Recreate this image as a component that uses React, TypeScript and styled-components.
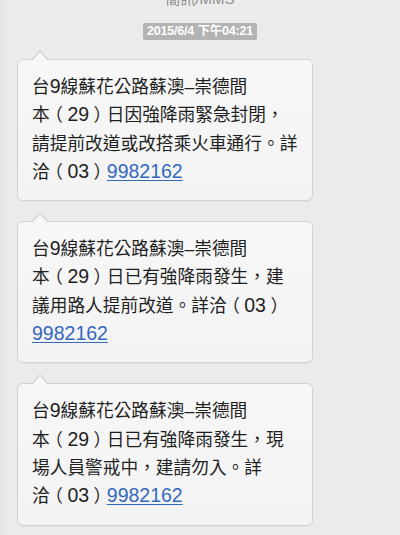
import React from "react";
import styled, { createGlobalStyle } from "styled-components";

const GlobalStyle = createGlobalStyle`
  html, body {
    margin: 0;
    padding: 0;
    background: #ebebeb;
  }
  body {
    font-family: "Liberation Sans", "Noto Sans CJK TC", sans-serif;
    overflow: hidden;
  }
`;

const Screen = styled.div`
  width: 400px;
  height: 535px;
  overflow: hidden;
  background: linear-gradient(to right, #e4e4e4 0px, #ebebeb 10px, #ebebeb 100%);
  display: flex;
  flex-direction: column;
  align-items: center;
`;

const Title = styled.div`
  margin-top: -9px;
  font-size: 15px;
  line-height: 16px;
  color: #8f8f8f;
  text-align: center;
`;

const DatePill = styled.div`
  margin-top: 16px;
  height: 17px;
  line-height: 17px;
  padding: 0 4px;
  background: #b3b3b3;
  color: #ffffff;
  font-size: 12.5px;
  font-weight: bold;
  letter-spacing: -0.2px;
  border-radius: 2px;
`;

const Thread = styled.div`
  align-self: stretch;
  display: flex;
  flex-direction: column;
  gap: 20px;
  padding: 19px 0 0 17px;
`;

const Bubble = styled.div`
  position: relative;
  box-sizing: border-box;
  width: 296px;
  padding: 13px 14px 14px 14px;
  background: linear-gradient(to bottom, #f7f7f7, #f3f3f3);
  border: 1px solid #d2d2d2;
  border-radius: 6px;
  box-shadow: 0 1px 0 rgba(0, 0, 0, 0.04);

  &::before,
  &::after {
    content: "";
    position: absolute;
    width: 0;
    height: 0;
    border-style: solid;
  }
  &::before {
    left: 14px;
    top: -10px;
    border-width: 0 8.5px 9px 8.5px;
    border-color: transparent transparent #d2d2d2 transparent;
  }
  &::after {
    left: 15px;
    top: -8px;
    border-width: 0 7.5px 8px 7.5px;
    border-color: transparent transparent #f7f7f7 transparent;
  }
`;

const Line = styled.div`
  font-family: "Liberation Sans", "Noto Sans CJK TC", sans-serif;
  font-size: 17.7px;
  line-height: 28.3px;
  height: 28.3px;
  color: #1f1f1f;
  white-space: nowrap;
  overflow: visible;
`;

const Num = styled.span`
  font-size: 19.5px;
  line-height: 0;
`;

const Paren = styled.span`
  display: inline-block;
  width: 17.7px;
  text-align: center;
  font-feature-settings: "halt" 1;
  line-height: 0;
`;

const Phone = styled.a`
  color: #3468bd;
  font-size: 19.5px;
  line-height: 0;
  text-decoration: underline;
  text-decoration-thickness: 1px;
  text-underline-offset: 2px;
`;

type Msg = { lines: string[]; tailPrefix: string };

const messages: Msg[] = [
  {
    lines: [
      "台9線蘇花公路蘇澳–崇德間",
      "本（29）日因強降雨緊急封閉，",
      "請提前改道或改搭乘火車通行。詳",
    ],
    tailPrefix: "洽（03）",
  },
  {
    lines: [
      "台9線蘇花公路蘇澳–崇德間",
      "本（29）日已有強降雨發生，建",
      "議用路人提前改道。詳洽（03）",
    ],
    tailPrefix: "",
  },
  {
    lines: [
      "台9線蘇花公路蘇澳–崇德間",
      "本（29）日已有強降雨發生，現",
      "場人員警戒中，建請勿入。詳",
    ],
    tailPrefix: "洽（03）",
  },
];

function renderText(text: string) {
  const parts = text.split(/([0-9]+|[（）])/).filter((p) => p !== "");
  return parts.map((p, i) => {
    if (p === "（" || p === "）") return <Paren key={i}>{p}</Paren>;
    if (/^[0-9]+$/.test(p)) return <Num key={i}>{p}</Num>;
    return <React.Fragment key={i}>{p}</React.Fragment>;
  });
}

export default function App() {
  return (
    <>
      <GlobalStyle />
      <Screen>
        <Title>簡訊/MMS</Title>
        <DatePill>2015/6/4 下午04:21</DatePill>
        <Thread>
          {messages.map((m, i) => (
            <Bubble key={i}>
              {m.lines.map((l, j) => (
                <Line key={j}>{renderText(l)}</Line>
              ))}
              <Line>
                {renderText(m.tailPrefix)}
                <Phone href="#">9982162</Phone>
              </Line>
            </Bubble>
          ))}
        </Thread>
      </Screen>
    </>
  );
}
